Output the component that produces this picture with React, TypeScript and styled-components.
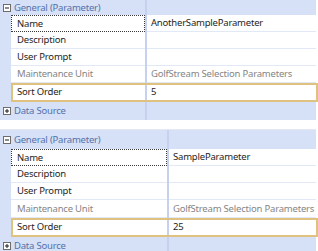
import React from 'react';
import styled, { createGlobalStyle } from 'styled-components';

const Global = createGlobalStyle`
  html, body { margin: 0; padding: 0; background: #ffffff; }
  body { font-family: "Noto Sans", "Open Sans", sans-serif; }
`;

const BG = '#d6e0f6';
const DIV = '#c5d1ee';
const TAN = '#dfc27f';

const Page = styled.div`
  width: 318px;
  height: 251px;
  overflow: hidden;
  background: #ffffff;
  display: flex;
  flex-direction: column;
`;

const Panel = styled.div<{ $split: number; $gapTop?: boolean }>`
  width: 316px;
  display: flex;
  flex-direction: column;
  font-size: 9.5px;
  letter-spacing: -0.2px;
  margin-top: ${(p) => (p.$gapTop ? '9px' : '0')};
  border-top: ${(p) => (p.$gapTop ? '1px solid #e4e8f0' : 'none')};
  background: linear-gradient(
    to right,
    ${BG} 0,
    ${BG} ${(p) => p.$split}px,
    ${DIV} ${(p) => p.$split}px,
    ${DIV} ${(p) => p.$split + 2}px,
    ${BG} ${(p) => p.$split + 2}px
  );
`;

const Category = styled.div<{ $h: number }>`
  height: ${(p) => p.$h}px;
  display: flex;
  align-items: center;
  gap: 3px;
  padding-left: 3px;
  color: #5471aa;
  line-height: 1;
`;

const Row = styled.div<{ $h: number; $label: number; $selected?: boolean }>`
  height: ${(p) => p.$h}px;
  margin-left: 11px;
  margin-right: ${(p) => (p.$selected ? '-2px' : '0')};
  display: grid;
  grid-template-columns: ${(p) => p.$label}px 2px 1fr;
  outline: ${(p) => (p.$selected ? `2px solid ${TAN}` : 'none')};
  outline-offset: -2px;
`;

const Cell = styled.div<{ $kind: 'label' | 'value'; $muted?: boolean; $focus?: boolean }>`
  box-sizing: border-box;
  background: #ffffff;
  display: flex;
  align-items: center;
  padding-left: ${(p) => (p.$kind === 'label' ? '6px' : '4px')};
  color: ${(p) => (p.$muted ? '#858585' : '#1e1e1e')};
  border-bottom: 1px solid #e1e8f6;
  border: ${(p) => (p.$focus ? '1px dotted #3a3a3a' : undefined)};
  padding-left: ${(p) => (p.$focus ? (p.$kind === 'label' ? '5px' : '3px') : undefined)};
  white-space: nowrap;
  overflow: hidden;
  line-height: 1;
`;

const Gap = styled.div``;

const Toggle = ({ open }: { open: boolean }) => (
  <svg width="8" height="8" viewBox="0 0 8 8">
    <rect x="0.5" y="0.5" width="7" height="7" fill="#ffffff" stroke="#6d6d6d" />
    <line x1="2" y1="4" x2="6" y2="4" stroke="#1a1a1a" />
    {!open && <line x1="4" y1="2" x2="4" y2="6" stroke="#1a1a1a" />}
  </svg>
);

type Prop = { label: string; value: string; muted?: boolean; focus?: boolean; selected?: boolean; h: number };

const Grid = ({ split, headH, name, value, top, hs }: { split: number; headH: number; name: string; value: string; top?: boolean; hs: number[] }) => {
  const props: Prop[] = [
    { label: 'Name', value: name, focus: true, h: hs[0] },
    { label: 'Description', value: '', h: hs[1] },
    { label: 'User Prompt', value: '', h: hs[2] },
    { label: 'Maintenance Unit', value: 'GolfStream Selection Parameters', muted: true, h: hs[3] },
    { label: 'Sort Order', value, selected: true, h: hs[4] },
  ];
  const labelW = split - 11;
  return (
    <Panel $split={split} $gapTop={!top}>
      <Category $h={headH}>
        <Toggle open />
        <span>General (Parameter)</span>
      </Category>
      {props.map((p) => (
        <Row key={p.label} $h={p.h} $label={labelW} $selected={p.selected}>
          <Cell $kind="label" $muted={p.muted} $focus={p.focus}>{p.label}</Cell>
          <Gap />
          <Cell $kind="value" $muted={p.muted}>{p.value}</Cell>
        </Row>
      ))}
      <Category $h={18}>
        <Toggle open={false} />
        <span>Data Source</span>
      </Category>
    </Panel>
  );
};

export default function App() {
  return (
    <Page>
      <Global />
      <Grid top split={145} headH={15} name="AnotherSampleParameter" value="5" hs={[17, 17, 17, 17, 19]} />
      <Grid split={167} headH={19} name="SampleParameter" value="25" hs={[17, 17, 17, 18, 19]} />
    </Page>
  );
}
